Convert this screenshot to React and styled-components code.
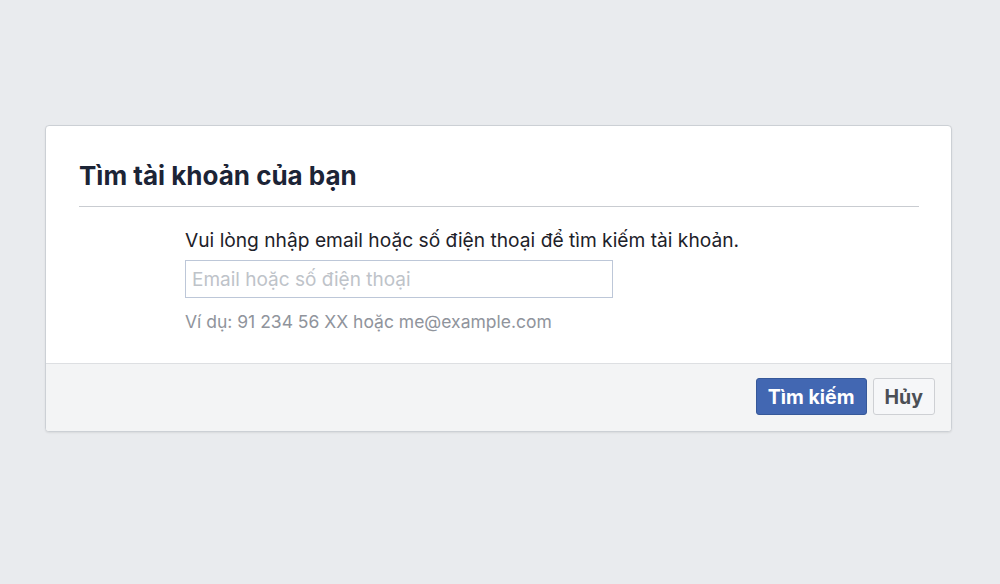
import React from 'react';
import styled, {createGlobalStyle} from 'styled-components';

const GlobalStyle = createGlobalStyle`
  html, body {
    margin: 0;
    padding: 0;
    background: #e9ebee;
    font-family: Inter, "Noto Sans", "Liberation Sans", sans-serif;
  }
`;

const Page = styled.div`
  width: 1000px;
  height: 584px;
  box-sizing: border-box;
  padding: 125px 48px 0 45px;
`;

const Card = styled.div`
  background: #fff;
  border: 1px solid #ccd0d5;
  border-radius: 4px;
  box-shadow: 0 1px 2px rgba(0, 0, 0, .08);
  overflow: hidden;
`;

const Header = styled.div`
  margin: 0 32px 0 33px;
  padding: 35px 0 16px;
  border-bottom: 1px solid #c9ccd1;
`;

const Title = styled.h2`
  margin: 0;
  font-size: 26px;
  line-height: 29px;
  font-weight: 700;
  color: #1c2436;
`;

const Body = styled.div`
  padding: 21px 0 31px 139px;
  display: flex;
  flex-direction: column;
`;

const Lead = styled.div`
  font-size: 19.2px;
  line-height: 25px;
  color: #1d2129;
`;

const EmailInput = styled.input`
  margin-top: 7px;
  width: 428px;
  height: 38px;
  box-sizing: border-box;
  border: 1px solid #bdc7d8;
  padding: 0 6px;
  font-family: inherit;
  font-size: 19px;
  color: #1d2129;
  outline: none;
  &::placeholder { color: #bec3c9; }
`;

const Hint = styled.div`
  margin-top: 13px;
  font-size: 17.5px;
  line-height: 21px;
  color: #90949c;
`;

const Footer = styled.div`
  background: #f3f4f5;
  border-top: 1px solid #dddfe2;
  padding: 14px 16px 16px;
  display: flex;
  justify-content: flex-end;
  gap: 6px;
`;

const Button = styled.button`
  height: 37px;
  box-sizing: border-box;
  padding: 0 11px;
  border-radius: 3px;
  border: 1px solid ${p => p.$primary ? '#365899' : '#ced0d4'};
  background: ${p => p.$primary ? '#4267b2' : '#f6f7f9'};
  color: ${p => p.$primary ? '#fff' : '#4b4f56'};
  font-family: inherit;
  font-size: 19.5px;
  font-weight: 700;
  cursor: pointer;
`;

export default function App() {
  return (
    <Page>
      <GlobalStyle/>
      <Card>
        <Header>
          <Title>Tìm tài khoản của bạn</Title>
        </Header>
        <Body>
          <Lead>Vui lòng nhập email hoặc số điện thoại để tìm kiếm tài khoản.</Lead>
          <EmailInput type="text" placeholder="Email hoặc số điện thoại" autoFocus/>
          <Hint>Ví dụ: 91 234 56 XX hoặc me@example.com</Hint>
        </Body>
        <Footer>
          <Button $primary>Tìm kiếm</Button>
          <Button>Hủy</Button>
        </Footer>
      </Card>
    </Page>
  );
}
